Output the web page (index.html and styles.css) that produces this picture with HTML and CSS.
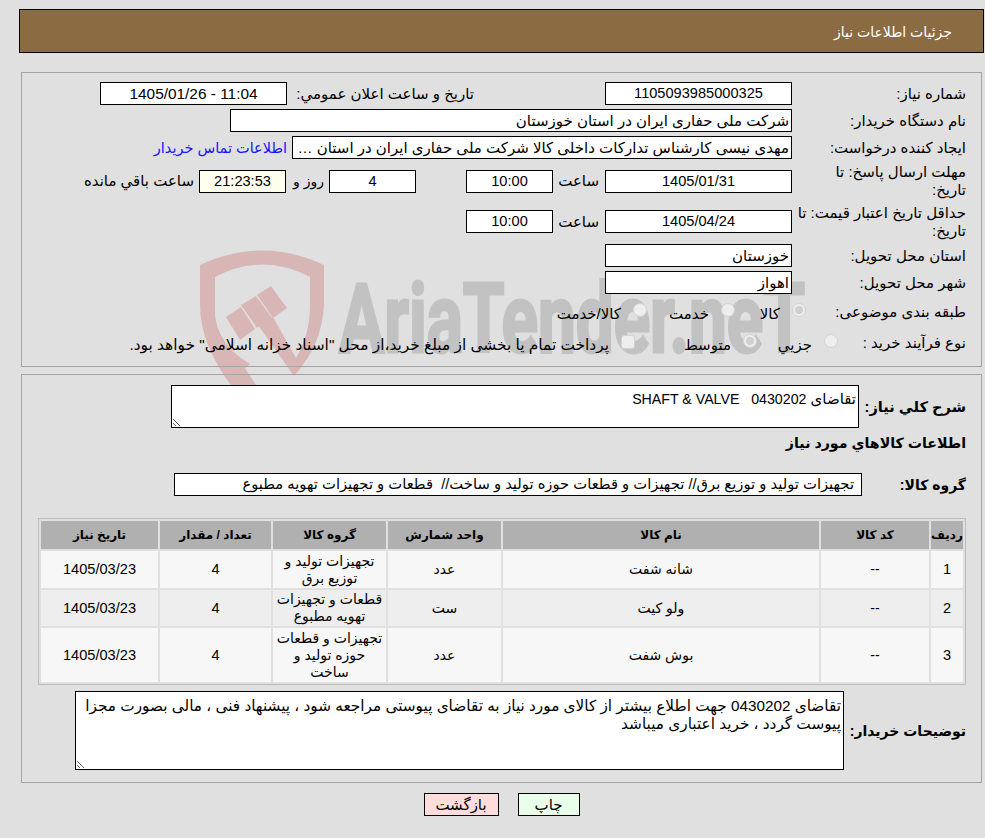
FILE: index.html
```html
<!DOCTYPE html>
<html lang="fa" dir="rtl">
<head>
<meta charset="utf-8">
<title>جزئیات اطلاعات نیاز</title>
<link rel="stylesheet" href="styles.css">
</head>
<body>
<svg class="watermark" width="985" height="400" viewBox="0 0 985 400" aria-hidden="true">
  <g class="wm-red">
    <path d="M200 265 Q262 236 324 265 L324 305 Q322 345 294 376 L258 325 L273 317 L296 358 Q310 335 310 305 L310 277 Q262 252 215 277 L215 315 Q218 345 250 364 L245 368 L258 388 L233 388 Q200 345 200 305 Z"/>
    <polygon points="226,317 241,307 255,329 240,340"/>
    <polygon points="241,305 256,296 272,318 257,328"/>
    <polygon points="257,295 271,286 287,308 273,318"/>
  </g>
  <text class="wm-text" x="339" y="352" textLength="466" lengthAdjust="spacingAndGlyphs" dir="ltr">AriaTender.neT</text>
</svg>
<div class="page">
  <header class="title-bar">جزئیات اطلاعات نیاز</header>

  <section class="panel panel-top">
    <div class="row">
      <div class="label">شماره نیاز:</div>
      <div class="field w187 center num">1105093985000325</div>
      <div class="side-label">تاریخ و ساعت اعلان عمومي:</div>
      <div class="field w187 center num wide-num">11:04 - 1405/01/26</div>
    </div>
    <div class="row">
      <div class="label">نام دستگاه خریدار:</div>
      <div class="field w562">شرکت ملی حفاری ایران در استان خوزستان</div>
    </div>
    <div class="row">
      <div class="label">ایجاد کننده درخواست:</div>
      <div class="field w500 clip">مهدی نیسی کارشناس تدارکات داخلی کالا شرکت ملی حفاری ایران در استان خوزستان</div>
      <a class="contact" href="#">اطلاعات تماس خریدار</a>
    </div>
    <div class="row tall">
      <div class="label">مهلت ارسال پاسخ: تا<br>تاریخ:</div>
      <div class="field w187 center num">1405/01/31</div>
      <div class="hour">ساعت</div>
      <div class="field w87 center num">10:00</div>
      <div class="field w87 center num days">4</div>
      <div class="day-word">روز و</div>
      <div class="field w87 center num timer">21:23:53</div>
      <div class="remain">ساعت باقي مانده</div>
    </div>
    <div class="row tall">
      <div class="label">حداقل تاریخ اعتبار قیمت: تا<br>تاریخ:</div>
      <div class="field w187 center num">1405/04/24</div>
      <div class="hour">ساعت</div>
      <div class="field w87 center num">10:00</div>
    </div>
    <div class="row">
      <div class="label">استان محل تحویل:</div>
      <div class="field w187">خوزستان</div>
    </div>
    <div class="row">
      <div class="label">شهر محل تحویل:</div>
      <div class="field w187">اهواز</div>
    </div>
    <div class="row choice choice-a">
      <div class="label">طبقه بندی موضوعی:</div>
      <div class="opt opt-a1"><span class="radio on"></span><span class="opt-text">کالا</span></div>
      <div class="opt opt-a2"><span class="radio"></span><span class="opt-text">خدمت</span></div>
      <div class="opt"><span class="radio"></span><span class="opt-text">کالا/خدمت</span></div>
    </div>
    <div class="row choice choice-b">
      <div class="label">نوع فرآیند خرید :</div>
      <div class="opt opt-b1"><span class="radio"></span><span class="opt-text">جزيي</span></div>
      <div class="opt opt-b2"><span class="radio on"></span><span class="opt-text">متوسط</span></div>
      <div class="opt"><span class="check"></span><span class="opt-text long-text">پرداخت تمام يا بخشی از مبلغ خرید،از محل "اسناد خزانه اسلامی" خواهد بود.</span></div>
    </div>
  </section>

  <section class="panel panel-bottom">
    <div class="b-row desc-row">
      <div class="b-label">شرح کلي نیاز:</div>
      <div class="area area-desc">تقاضای <span class="latin">0430202   SHAFT &amp; VALVE</span></div>
    </div>
    <h2 class="goods-title">اطلاعات کالاهاي مورد نیاز</h2>
    <div class="b-row group-row">
      <div class="b-label">گروه کالا:</div>
      <div class="field group-field">تجهیزات تولید و توزیع برق// تجهیزات و قطعات حوزه تولید و ساخت//  قطعات و تجهیزات تهویه مطبوع</div>
    </div>
    <table class="goods">
      <colgroup>
        <col class="c1"><col class="c2"><col class="c3"><col class="c4"><col class="c5"><col class="c6"><col class="c7">
      </colgroup>
      <thead>
        <tr><th>ردیف</th><th>کد کالا</th><th>نام کالا</th><th>واحد شمارش</th><th>گروه کالا</th><th>تعداد / مقدار</th><th>تاریخ نیاز</th></tr>
      </thead>
      <tbody>
        <tr class="r1"><td class="num">1</td><td>--</td><td>شانه شفت</td><td>عدد</td><td>تجهیزات تولید و<br>توزیع برق</td><td class="num">4</td><td class="num">1405/03/23</td></tr>
        <tr class="r2"><td class="num">2</td><td>--</td><td>ولو کیت</td><td>ست</td><td>قطعات و تجهیزات<br>تهویه مطبوع</td><td class="num">4</td><td class="num">1405/03/23</td></tr>
        <tr class="r3"><td class="num">3</td><td>--</td><td>بوش شفت</td><td>عدد</td><td>تجهیزات و قطعات<br>حوزه تولید و<br>ساخت</td><td class="num">4</td><td class="num">1405/03/23</td></tr>
      </tbody>
    </table>
    <div class="b-row notes-row">
      <div class="b-label">توضیحات خریدار:</div>
      <div class="area area-notes">تقاضای 0430202 جهت اطلاع بیشتر از کالای مورد نیاز به تقاضای پیوستی مراجعه شود ، پیشنهاد فنی ، مالی بصورت مجزا پیوست گردد ، خرید اعتباری میباشد</div>
    </div>
  </section>

  <div class="actions">
    <button class="btn btn-print" type="button">چاپ</button>
    <button class="btn btn-back" type="button">بازگشت</button>
  </div>
</div>
</body>
</html>
```

FILE: styles.css
```css
* { box-sizing: border-box; }
html, body { margin: 0; padding: 0; }
body {
  width: 985px;
  min-height: 838px;
  background: #e0e0e0;
  color: #000;
  font-family: "Liberation Sans", "DejaVu Sans", sans-serif;
  font-size: 15px;
  line-height: 18px;
  position: relative;
  overflow: hidden;
}
.watermark { position: absolute; left: 0; top: 0; z-index: 0; }
.wm-red { fill: #d8b6b6; }
.wm-text { fill: #c2c2c2; stroke: #c2c2c2; stroke-width: 3px; font-family: "Roboto", sans-serif; font-weight: 700; font-size: 96px; direction: ltr; }
.page { position: relative; z-index: 1; width: 985px; padding-top: 9px; }

.title-bar {
  width: 965px;
  height: 44px;
  margin-right: 1px;
  padding: 0 31px;
  background: #8b6b42;
  border: 1px solid #000;
  color: #fff;
  font-size: 14px;
  line-height: 45px;
}

.panel { width: 961px; margin-right: 3px; border: 1px solid #a3a3a3; }
.panel-top { height: 295px; margin-top: 19px; padding: 9px 15px 0 0; display: flex; flex-direction: column; gap: 4px; }
.panel-bottom { height: 409px; margin-top: 7px; padding: 10px 15px 0 0; }

.row { display: flex; align-items: center; height: 23px; }
.row.tall { height: 36.5px; }
.row.choice-a { height: 28px; }
.row.choice-b { height: 26px; }
.label { width: 174px; flex: none; line-height: 18px; white-space: nowrap; }
.field {
  flex: none;
  height: 23px;
  background: #fff;
  border: 1px solid #000;
  padding: 0 2px;
  line-height: 21px;
  white-space: pre;
  overflow: hidden;
}
.center { text-align: center; }
.num { font-size: 14.6px; }
.wide-num { font-size: 15.4px; }
.latin { font-size: 14.2px; white-space: pre; }
.w187 { width: 187px; }
.w562 { width: 562px; }
.w500 { width: 500px; }
.w87 { width: 87px; }
.clip { text-overflow: ellipsis; }
.side-label { margin-right: 131px; width: 187px; white-space: nowrap; flex: none; }
.contact { margin-right: 5px; color: #1414ff; font-size: 14.5px; text-decoration: none; white-space: nowrap; }
.hour { width: 46px; flex: none; margin-right: 6px; white-space: nowrap; }
.days { margin-right: 50px; }
.day-word { width: 43px; flex: none; padding-right: 5px; font-size: 14px; white-space: nowrap; }
.timer { background: #ffffee; }
.remain { margin-right: 5px; white-space: nowrap; }

.choice-a .label { width: 160px; }
.choice-b .label { width: 128px; }
.opt { display: flex; align-items: center; gap: 12px; flex: none; white-space: nowrap; }
.opt-text { margin-top: 3px; }
.long-text { font-size: 15.4px; }
.opt-a1 { width: 71px; }
.opt-a2 { width: 88px; }
.opt-b1 { width: 81px; }
.opt-b2 { width: 122px; }
.radio, .check {
  display: block;
  width: 14px;
  height: 14px;
  flex: none;
  background: #eeeeee;
  border: 1px solid #d2d2d2;
  border-radius: 50%;
  margin-top: -5px;
  position: relative;
}
.radio.on::after {
  content: "";
  position: absolute;
  left: 2px;
  top: 2px;
  width: 8px;
  height: 8px;
  border-radius: 50%;
  background: #cfcfcf;
}
.check { border-radius: 3px; margin-top: -3px; }

.b-row { display: flex; align-items: center; }
.b-label { font-weight: 700; font-size: 14px; flex: none; white-space: nowrap; }
.desc-row { height: 43px; }
.desc-row .b-label { width: 107px; font-size: 14.6px; }
.group-row { height: 23px; margin-top: 21px; }
.group-row .b-label { width: 104px; }
.goods-title { margin: 6px 0 0; height: 18px; font-size: 14.2px; font-weight: 700; line-height: 18px; }
.area {
  flex: none;
  background: #fff;
  border: 1px solid #000;
  padding: 4px 2px 2px;
  white-space: pre-wrap;
  overflow: hidden;
  resize: both;
}
.area-desc { width: 688px; height: 43px; }
.area-notes { width: 769px; height: 79px; padding-top: 5px; font-size: 15.3px; }
.group-field { width: 688px; padding: 0 7px; font-size: 14.75px; }

.goods {
  width: 928px;
  margin-top: 22px;
  table-layout: fixed;
  border-collapse: separate;
  border-spacing: 2px;
  border: 1px solid #bdbdbd;
  text-align: center;
}
.c1 { width: 32px; }
.c2 { width: 108px; }
.c3 { width: 316px; }
.c4 { width: 113px; }
.c5 { width: 113px; }
.c6 { width: 111px; }
.c7 { width: 117px; }
.goods th { height: 28px; padding: 0; background: #b0b0b0; font-size: 12px; font-weight: 700; white-space: nowrap; }
.goods td { padding: 0 2px; font-size: 14px; line-height: 17px; white-space: nowrap; }
.goods td.num { font-size: 14.6px; }
.r1 td { height: 37px; background: #f7f7f7; }
.r2 td { height: 36px; background: #eeeeee; }
.r3 td { height: 54px; background: #f7f7f7; }
.notes-row { margin-top: 6px; }
.notes-row .b-label { width: 122px; }

.actions { display: flex; justify-content: center; gap: 19px; height: 23px; margin-top: 10px; margin-right: -9px; width: 985px; }
.btn {
  height: 23px;
  padding: 0;
  border: 1px solid #000;
  border-radius: 0;
  color: #000;
  font: inherit;
}
.btn-print { width: 62px; background: #e9ffe9; }
.btn-back { width: 75px; background: #ffdddd; }
```
